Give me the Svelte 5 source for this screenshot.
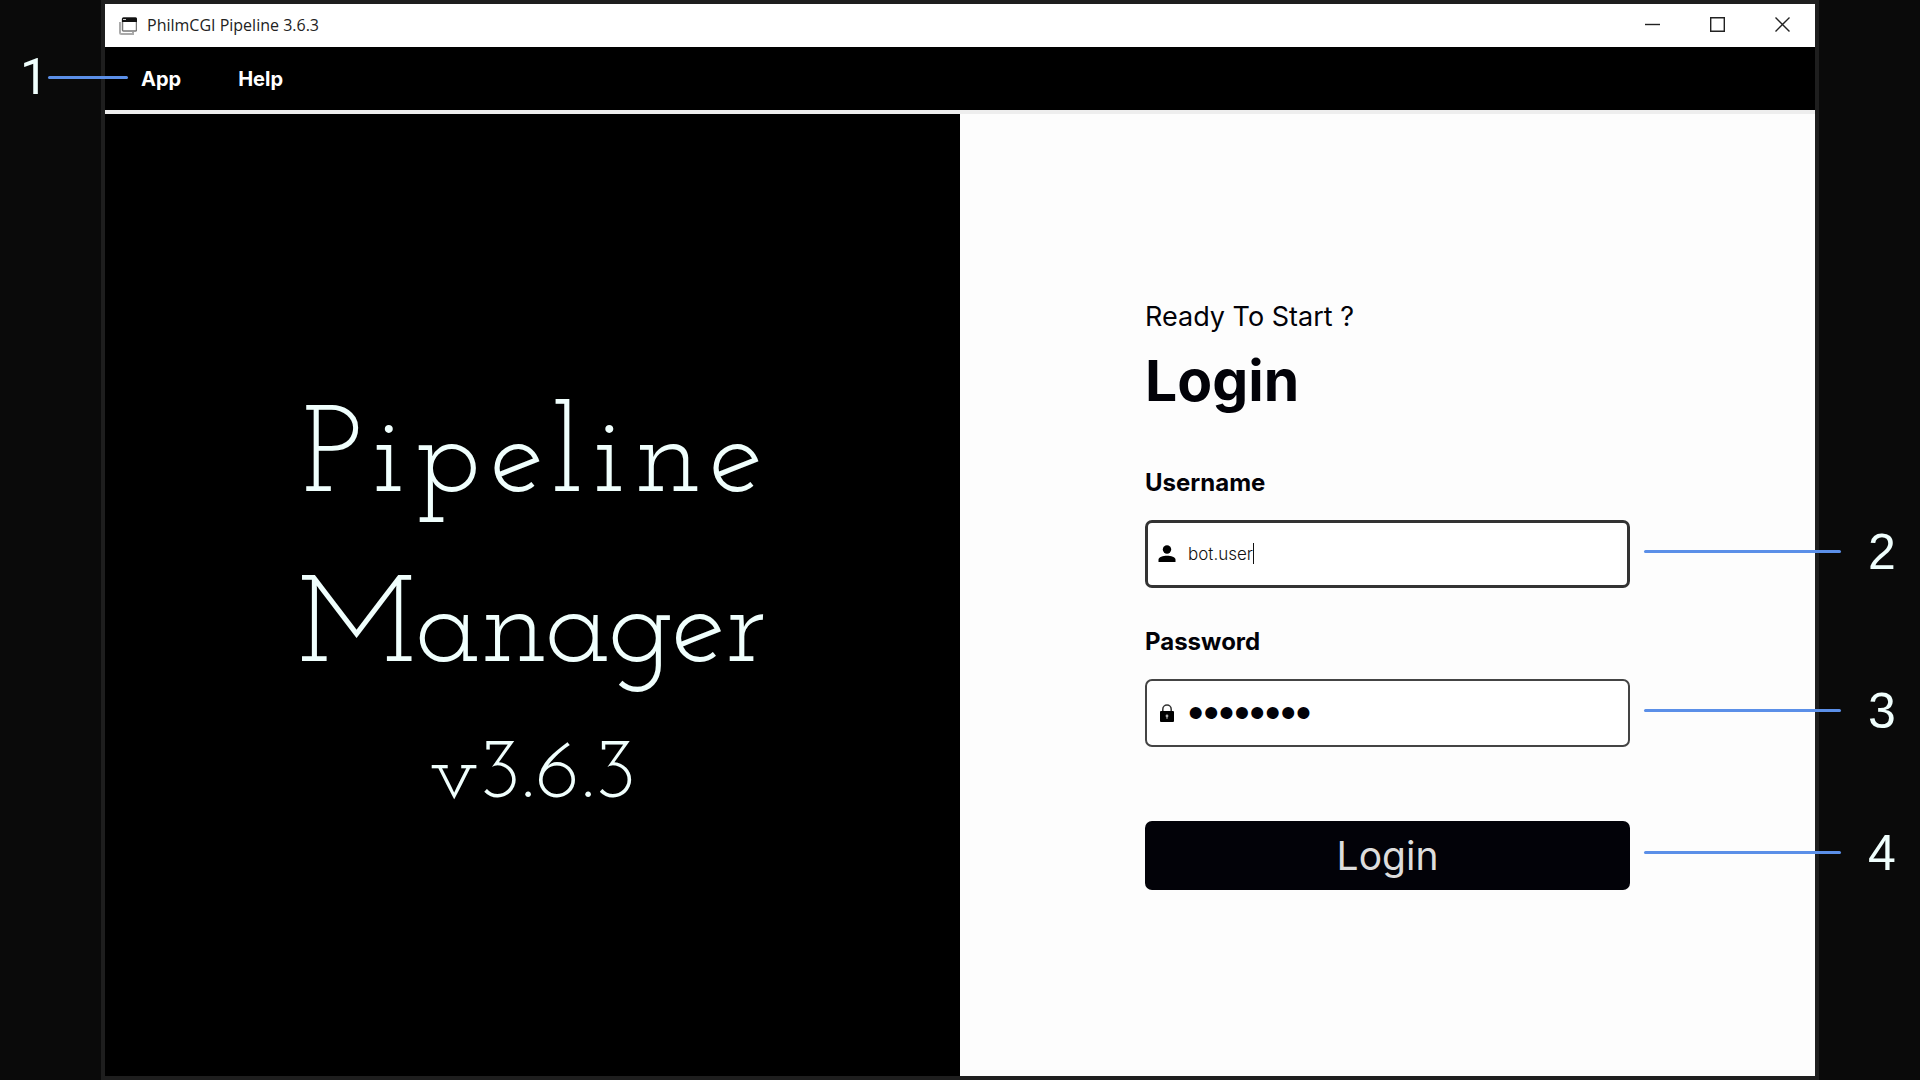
<script>
  const version = '3.6.3'

  let username = 'bot.user'
  let password = 'password'
</script>

<div class="page">
  <div class="window">
    <header class="titlebar">
      <svg class="app-icon" viewBox="0 0 18 18" aria-hidden="true">
        <path d="M1 5v10.500q0 1.500 1.500 1.500H14v-2" fill="none" stroke="#aaa" stroke-width="2" />
        <rect x="3.500" y="1" width="14" height="13" rx="1" fill="#fff" stroke="#777" stroke-width="1.500" />
        <path d="M3 2q0-1.500 1.500-1.500h12q1.500 0 1.500 1.500v3H3z" fill="#111" />
        <path d="M4 2.500h3" stroke="#ccc" />
      </svg>
      <span class="title">PhilmCGI Pipeline {version}</span>
      <div class="controls">
        <button aria-label="Minimize">
          <svg viewBox="0 0 15 15"><path d="M0 7.500h15" /></svg>
        </button>
        <button aria-label="Maximize">
          <svg viewBox="0 0 15 15"><path d="M.7.700h13.600v13.600H.7z" /></svg>
        </button>
        <button aria-label="Close">
          <svg viewBox="0 0 15 15"><path d="M.5.500l14 14M14.500.500l-14 14" /></svg>
        </button>
      </div>
    </header>

    <nav class="menu">
      <div class="callout left"><span>1</span><i></i></div>
      <button>App</button>
      <button>Help</button>
    </nav>

    <main>
      <section class="brand">
        <h1><span class="wide">Pipeline</span><br />Manager</h1>
        <p>v{version}</p>
      </section>

      <section class="login">
        <form on:submit|preventDefault>
          <p class="intro">Ready To Start ?</p>
          <h2>Login</h2>

          <label class="name" for="username">Username</label>
          <div class="row">
            <label class="field active" for="username">
              <svg viewBox="0 0 18 18" aria-hidden="true">
                <circle cx="9" cy="4.500" r="4.200" />
                <path d="M.5 17v-2.200C.5 12 5 10.700 9 10.700s8.500 1.300 8.500 4.100V17z" />
              </svg>
              <input id="username" type="text" autocomplete="off" spellcheck="false" bind:value={username} />
              <span class="caret"></span>
            </label>
            <div class="callout"><i></i><span>2</span></div>
          </div>

          <label class="name" for="password">Password</label>
          <div class="row">
            <label class="field" for="password">
              <svg viewBox="0 0 18 18" aria-hidden="true">
                <path d="M4.800 8V5.200a4.200 4.200 0 0 1 8.400 0V8" fill="none" stroke="#333" stroke-width="1.500" />
                <rect x="2" y="7" width="14" height="11" rx="1" />
                <circle cx="9" cy="12" r="1.400" fill="#aaa" />
                <path d="M9 12v3" stroke="#aaa" />
              </svg>
              <input id="password" type="password" bind:value={password} />
            </label>
            <div class="callout"><i></i><span>3</span></div>
          </div>

          <div class="row submit">
            <button type="submit">Login</button>
            <div class="callout"><i></i><span>4</span></div>
          </div>
        </form>
      </section>
    </main>
  </div>
</div>

<style>
  :global(body) {
    background: #0a0a0a;
  }

  .page {
    box-sizing: border-box;
    display: flex;
    min-height: 100vh;
    padding: 0 101px;
    font-family: Inter, 'Liberation Sans', sans-serif;
  }

  .window {
    flex: 1;
    display: flex;
    flex-direction: column;
    border: 4px solid #1e1e1e;
  }

  button {
    border: 0;
    padding: 0;
    background: none;
    font-family: inherit;
    cursor: pointer;
  }

  h1, h2, p {
    margin: 0;
  }

  .titlebar {
    display: flex;
    align-items: center;
    height: 43px;
    padding-left: 14px;
    background: #fff;
  }

  .app-icon {
    width: 18px;
    height: 18px;
    margin-right: 10px;
  }

  .title {
    color: #222;
    font-family: 'Segoe UI', 'Open Sans', 'Noto Sans', sans-serif;
    font-size: 16px;
    line-height: 22px;
    padding-bottom: 2px;
  }

  .controls {
    display: flex;
    align-self: stretch;
    margin-left: auto;
    padding-bottom: 3px;
  }

  .controls button {
    display: flex;
    align-items: center;
    justify-content: center;
    width: 65px;
  }

  .controls svg {
    width: 15px;
    height: 15px;
    fill: none;
    stroke: #222;
    stroke-width: 1.4;
  }

  .menu {
    position: relative;
    display: flex;
    gap: 57px;
    height: 63px;
    padding-left: 36px;
    background: #000;
    border-bottom: 4px solid #eee;
  }

  .menu button {
    color: #fff;
    font-size: 20px;
    font-weight: 700;
  }

  main {
    flex: 1;
    display: grid;
    grid-template-columns: 1fr 1fr;
  }

  .brand {
    display: flex;
    flex-direction: column;
    align-items: center;
    justify-content: center;
    padding-top: 22px;
    background: #000;
    color: #f0fffd;
    font-family: 'Josefin Slab', 'Liberation Serif', serif;
    text-align: center;
  }

  .brand h1 {
    font-size: 122px;
    font-weight: 400;
    line-height: 170px;
  }

  .wide {
    padding-left: 10px;
    letter-spacing: 10px;
  }

  .brand p {
    font-size: 86px;
    line-height: 120px;
  }

  .login {
    display: flex;
    align-items: center;
    justify-content: center;
    background: #fdfdfd;
  }

  form {
    display: flex;
    flex-direction: column;
    width: 485px;
    color: #020208;
  }

  .intro {
    font-size: 27px;
    line-height: 32px;
  }

  h2 {
    margin: 12px 0 52px;
    font-size: 57px;
    line-height: 72px;
  }

  .name {
    margin-bottom: 23px;
    font-size: 24px;
    font-weight: 700;
    line-height: 28px;
  }

  .row {
    position: relative;
    margin-bottom: 40px;
  }

  .field {
    box-sizing: border-box;
    display: flex;
    align-items: center;
    height: 68px;
    padding: 0 11px;
    border: 2px solid #444;
    border-radius: 7px;
    background: #fff;
  }

  .field.active {
    border: 3px solid #333;
    padding: 0 10px;
  }

  .field svg {
    width: 18px;
    height: 18px;
    margin-right: 12px;
  }

  input {
    min-width: 0;
    padding: 0;
    border: 0;
    outline: 0;
    background: none;
    color: #111;
    font-family: inherit;
    font-size: 17px;
    font-weight: 300;
    field-sizing: content;
  }

  input[type='password'] {
    color: #020208;
    font-family: 'Liberation Sans', Arial, sans-serif;
    font-size: 44px;
  }

  .caret {
    width: 1px;
    height: 21px;
    background: #111;
  }

  .submit {
    margin: 34px 0 0;
  }

  .submit button {
    display: block;
    width: 100%;
    height: 69px;
    border-radius: 7px;
    background: #020208;
    color: #ddd;
    font-size: 39px;
  }

  /* numbered markers hanging off the controls */
  .callout {
    position: absolute;
    top: 32px;
    left: 100%;
    display: flex;
    align-items: center;
    gap: 27px;
    height: 0;
    padding-left: 14px;
    color: #f0fffd;
    font-family: 'Liberation Sans', Arial, sans-serif;
    font-size: 50px;
  }

  .callout i {
    width: 197px;
    height: 3px;
    border-radius: 2px;
    background: #5b8fe8;
  }

  .callout.left {
    top: 30px;
    right: 100%;
    left: auto;
    gap: 0;
    margin-right: -23px;
    padding: 0;
    font-family: Roboto, sans-serif;
  }

  .callout.left i {
    width: 80px;
  }
</style>
